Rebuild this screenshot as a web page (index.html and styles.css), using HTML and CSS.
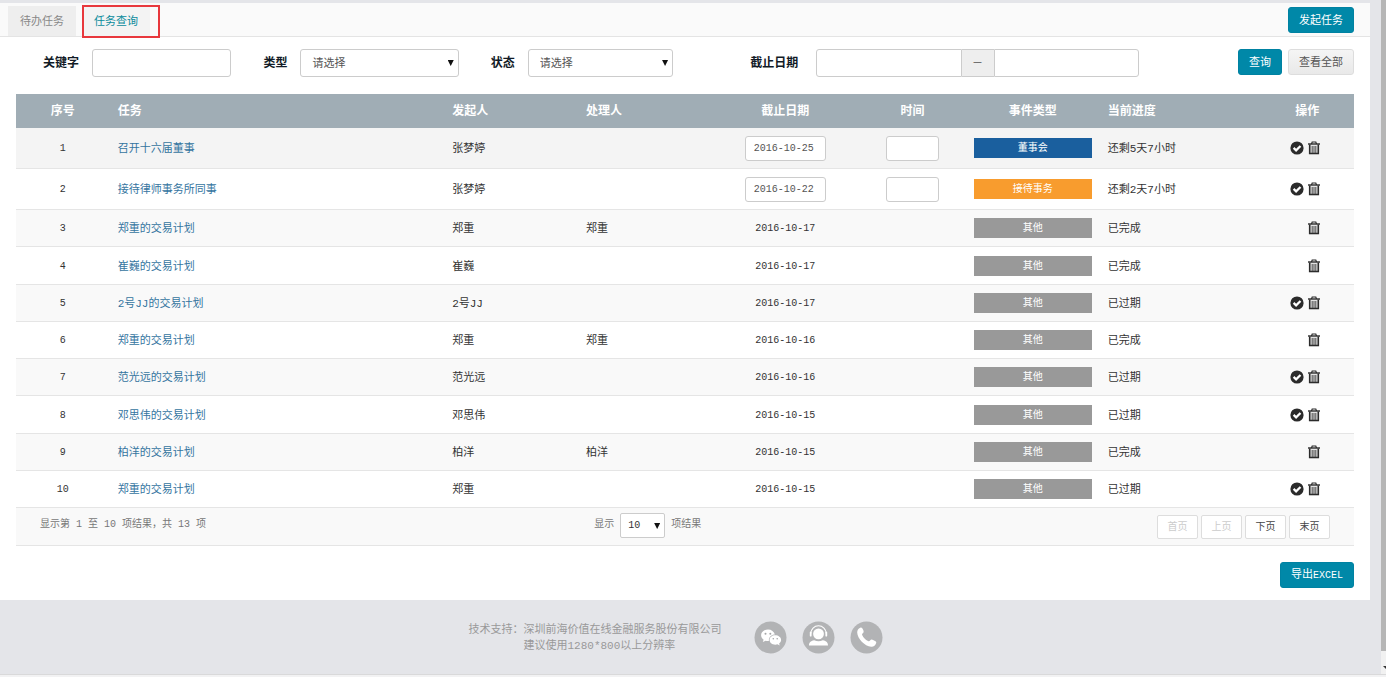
FILE: index.html
```html
<!DOCTYPE html>
<html lang="zh-CN">
<head>
<meta charset="utf-8">
<title>任务查询</title>
<link rel="stylesheet" href="styles.css">
</head>
<body>
<svg class="sprite" aria-hidden="true">
  <symbol id="i-check" viewBox="0 0 14 14"><circle cx="7" cy="7" r="6.6" fill="#2b2b2b"/><path d="M3.600 6.900l2.500 2.500 4.400-4.400" fill="none" stroke="#fff" stroke-width="2.200"/></symbol>
  <symbol id="i-trash" viewBox="0 0 14 14"><path d="M2.500 3.500h9v9.800h-9z" fill="#e2e2e2"/><g fill="none" stroke="#2b2b2b"><path d="M1 3h12" stroke-width="1.400"/><path d="M4.500 3l.7-2h3.600l.7 2" stroke-width="1.200"/><path d="M2.700 3.500v9h8.600v-9" stroke-width="1.600"/><path d="M5.200 5v7M7 5v7M8.800 5v7" stroke-width=".8"/></g></symbol>
</svg>
<div class="shell">
  <div class="page">
    <main class="panel">
      <header class="topbar">
        <nav class="tabs">
          <a class="tab" href="#todo">待办任务</a>
          <a class="tab tab-active" href="#query">任务查询</a>
        </nav>
        <button class="btn btn-primary" type="button">发起任务</button>
      </header>
      <form class="filters">
        <label for="keyword">关键字</label>
        <input class="field" id="keyword" type="text">
        <label for="type">类型</label>
        <span class="select"><select id="type"><option>请选择</option></select></span>
        <label for="state">状态</label>
        <span class="select"><select id="state"><option>请选择</option></select></span>
        <label class="label-date" for="from">截止日期</label>
        <div class="range">
          <input class="field" id="from" type="text">
          <span class="range-sep">－</span>
          <input class="field" type="text" aria-label="截止日期至">
        </div>
        <div class="filter-actions">
          <button class="btn btn-primary" type="button">查询</button>
          <button class="btn btn-plain" type="button">查看全部</button>
        </div>
      </form>
      <section class="results">
        <table class="tasks">
          <colgroup><col class="c7"><col class="c25"><col class="c10"><col class="c10"><col class="c11"><col class="c8"><col class="c10"><col class="c12"><col class="c7"></colgroup>
          <thead>
            <tr><th class="mid">序号</th><th>任务</th><th>发起人</th><th>处理人</th><th class="mid">截止日期</th><th class="mid">时间</th><th class="mid">事件类型</th><th>当前进度</th><th class="mid">操作</th></tr>
          </thead>
          <tbody>
            <tr class="open hover"><td class="num">1</td><td><a href="#t1">召开十六届董事</a></td><td>张梦婷</td><td></td><td class="num"><input class="field date" type="text" value="2016-10-25" aria-label="截止日期"></td><td class="num"><input class="field time" type="text" aria-label="时间"></td><td><span class="tag tag-board">董事会</span></td><td>还剩5天7小时</td><td class="ops"><button type="button" aria-label="完成"><svg><use href="#i-check"/></svg></button><button type="button" aria-label="删除"><svg><use href="#i-trash"/></svg></button></td></tr>
            <tr class="open"><td class="num">2</td><td><a href="#t2">接待律师事务所同事</a></td><td>张梦婷</td><td></td><td class="num"><input class="field date" type="text" value="2016-10-22" aria-label="截止日期"></td><td class="num"><input class="field time" type="text" aria-label="时间"></td><td><span class="tag tag-visit">接待事务</span></td><td>还剩2天7小时</td><td class="ops"><button type="button" aria-label="完成"><svg><use href="#i-check"/></svg></button><button type="button" aria-label="删除"><svg><use href="#i-trash"/></svg></button></td></tr>
            <tr><td class="num">3</td><td><a href="#t3">郑重的交易计划</a></td><td>郑重</td><td>郑重</td><td class="num">2016-10-17</td><td></td><td><span class="tag">其他</span></td><td>已完成</td><td class="ops"><button type="button" aria-label="删除"><svg><use href="#i-trash"/></svg></button></td></tr>
            <tr><td class="num">4</td><td><a href="#t4">崔巍的交易计划</a></td><td>崔巍</td><td></td><td class="num">2016-10-17</td><td></td><td><span class="tag">其他</span></td><td>已完成</td><td class="ops"><button type="button" aria-label="删除"><svg><use href="#i-trash"/></svg></button></td></tr>
            <tr><td class="num">5</td><td><a href="#t5">2号JJ的交易计划</a></td><td>2号JJ</td><td></td><td class="num">2016-10-17</td><td></td><td><span class="tag">其他</span></td><td>已过期</td><td class="ops"><button type="button" aria-label="完成"><svg><use href="#i-check"/></svg></button><button type="button" aria-label="删除"><svg><use href="#i-trash"/></svg></button></td></tr>
            <tr><td class="num">6</td><td><a href="#t6">郑重的交易计划</a></td><td>郑重</td><td>郑重</td><td class="num">2016-10-16</td><td></td><td><span class="tag">其他</span></td><td>已完成</td><td class="ops"><button type="button" aria-label="删除"><svg><use href="#i-trash"/></svg></button></td></tr>
            <tr><td class="num">7</td><td><a href="#t7">范光远的交易计划</a></td><td>范光远</td><td></td><td class="num">2016-10-16</td><td></td><td><span class="tag">其他</span></td><td>已过期</td><td class="ops"><button type="button" aria-label="完成"><svg><use href="#i-check"/></svg></button><button type="button" aria-label="删除"><svg><use href="#i-trash"/></svg></button></td></tr>
            <tr><td class="num">8</td><td><a href="#t8">邓思伟的交易计划</a></td><td>邓思伟</td><td></td><td class="num">2016-10-15</td><td></td><td><span class="tag">其他</span></td><td>已过期</td><td class="ops"><button type="button" aria-label="完成"><svg><use href="#i-check"/></svg></button><button type="button" aria-label="删除"><svg><use href="#i-trash"/></svg></button></td></tr>
            <tr><td class="num">9</td><td><a href="#t9">柏洋的交易计划</a></td><td>柏洋</td><td>柏洋</td><td class="num">2016-10-15</td><td></td><td><span class="tag">其他</span></td><td>已完成</td><td class="ops"><button type="button" aria-label="删除"><svg><use href="#i-trash"/></svg></button></td></tr>
            <tr><td class="num">10</td><td><a href="#t10">郑重的交易计划</a></td><td>郑重</td><td></td><td class="num">2016-10-15</td><td></td><td><span class="tag">其他</span></td><td>已过期</td><td class="ops"><button type="button" aria-label="完成"><svg><use href="#i-check"/></svg></button><button type="button" aria-label="删除"><svg><use href="#i-trash"/></svg></button></td></tr>
          </tbody>
        </table>
        <div class="table-foot">
          <span class="info">显示第 1 至 10 项结果，共 13 项</span>
          <div class="length">
            <label for="length">显示</label>
            <span class="select select-small"><select id="length"><option>10</option></select></span>
            <span>项结果</span>
          </div>
          <div class="pager">
            <button type="button" disabled>首页</button>
            <button type="button" disabled>上页</button>
            <button type="button">下页</button>
            <button type="button">末页</button>
          </div>
        </div>
        <div class="export"><button class="btn btn-primary" type="button">导出<span class="latin">EXCEL</span></button></div>
      </section>
    </main>
    <footer class="footer">
      <dl class="support">
        <dt>技术支持：</dt>
        <dd>深圳前海价值在线金融服务股份有限公司</dd>
        <dd>建议使用1280*800以上分辨率</dd>
      </dl>
      <div class="contacts">
        <a href="#wechat" aria-label="微信"><svg viewBox="0 0 33 33"><circle cx="16.500" cy="16.500" r="16" fill="#b2b3b5"/><path fill="#fff" d="M14 8.500c-3.900 0-6.900 2.500-6.900 5.700 0 1.900 1 3.400 2.500 4.500l-.8 2.300 2.800-1.300c1 .3 2.200.4 3.300.3-.4-3.700 2.500-6.500 6-6.500C20 10.500 17.500 8.500 14 8.500z"/><path fill="#fff" d="M21.200 14.300c-3.200 0-5.600 2.100-5.600 4.700s2.500 4.700 5.600 4.700c.8 0 1.600-.1 2.300-.4l2.200 1.200-.6-2c1.200-.9 2-2.100 2-3.500 0-2.600-2.700-4.700-5.900-4.700z"/><g fill="#a5a6a8"><circle cx="11.500" cy="12.700" r="1"/><circle cx="16.300" cy="12.700" r="1"/><circle cx="19.300" cy="17.700" r=".8"/><circle cx="23.200" cy="17.700" r=".8"/></g></svg></a>
        <a href="#service" aria-label="客服"><svg viewBox="0 0 33 33"><circle cx="16.500" cy="16.500" r="16" fill="#b2b3b5"/><circle cx="16.500" cy="12.900" r="5.400" fill="#fff"/><path d="M8.800 12.500a7.700 7.700 0 0 1 15.400 0" fill="none" stroke="#fff" stroke-width="1.100"/><path d="M8.700 11.300v3.400M24.300 11.300v3.400" stroke="#fff" stroke-width="1.800" stroke-linecap="round"/><path d="M7 24.500c0-3 1.500-4.300 5.200-5.200q4.300 2 8.600 0c3.700.9 5.200 2.200 5.200 5.200z" fill="#fff"/></svg></a>
        <a href="#phone" aria-label="电话"><svg viewBox="0 0 33 33"><circle cx="16.500" cy="16.500" r="16" fill="#b2b3b5"/><path fill="#fff" d="M10.300 6.700c1.200-.5 2 .2 2.700 1.900.7 1.600 1 2.600.1 3.400-1 .8-1.300 1.200-.8 2.300 1 2.300 3.200 4.500 5.700 5.700 1 .5 1.500.2 2.300-.7.8-1 1.600-.8 3.300-.1 2.200.9 3 1.600 2.600 2.800-.7 2.400-2.600 4-5 3.800C14.600 25.200 7.400 17.600 7.200 11.500c-.1-2.400 1.200-4.100 3.100-4.800z"/></svg></a>
      </div>
    </footer>
  </div>
  <div class="scroll" aria-hidden="true"><div class="thumb"></div><svg class="arrow" viewBox="0 0 5 5"><path d="M2 1h3v3z" fill="#333"/></svg></div>
</div>
</body>
</html>
```
FILE: styles.css
```css
* { box-sizing: border-box; }
body {
  margin: 0;
  background: #f2f2f3;
  color: #333;
  font: 11px/16px "Liberation Mono", "Noto Sans CJK SC", monospace;
}
button, input, select { font: inherit; color: inherit; margin: 0; }
a { text-decoration: none; }
.sprite { display: none; }

.shell { display: flex; min-height: calc(100vh - 3px); border-bottom: 1px solid #d9d9da; background: #e4e5e9; }
.page { flex: 1; padding-top: 3px; }
.panel { margin-right: 11px; background: #fff; }

.topbar {
  display: flex;
  justify-content: space-between;
  padding: 0 16px 0 8px;
  height: 34px;
  background: #fafafa;
  border-bottom: 1px solid #e4e4e4;
}
.topbar .btn { margin-top: 4px; }
.tabs { display: flex; gap: 6px; padding-top: 3px; }
.tab { padding: 8px 12px 6px; height: 30px; background: #eee; color: #888; }
.tab-active {
  position: relative;
  background: #f3f3f3;
  color: #0a8b9c;
}
.tab-active::after {
  content: "";
  position: absolute;
  inset: -1px -10px -2px 0;
  border: 2px solid #e8383d;
}

.btn {
  height: 26px;
  padding: 1px 10px 0;
  border: 1px solid #0082a2;
  border-radius: 3px;
  line-height: 16px;
}
.btn-primary { background: #0088a8; color: #fff; }
.btn-plain { background: linear-gradient(#f5f5f5, #e9e9e9); border-color: #ddd; color: #555; }
.latin { font-size: 10px; }

.filters {
  display: grid;
  grid-template-columns: 76fr 139fr 69fr 158fr 69fr 145fr 143fr 322fr 99fr auto;
  align-items: center;
  padding: 12px 16px 17px;
}
.filters label { padding: 2px 13px 0 0; text-align: right; font-size: 12px; font-weight: bold; color: #111a26; }
.filters .label-date { padding-right: 18px; }
.field {
  width: 100%;
  min-width: 0;
  height: 28px;
  padding: 0 8px;
  border: 1px solid #ccc;
  border-radius: 3px;
  background: #fff;
  color: #555;
}
.select { position: relative; display: block; }
.select select {
  appearance: none;
  width: 100%;
  height: 28px;
  padding: 2px 11px 0;
  border: 1px solid #ccc;
  border-radius: 3px;
  background: #fff;
  color: #555;
}
.select::after {
  content: "";
  position: absolute;
  right: 5px;
  top: 11px;
  width: 6px;
  height: 6px;
  background: #111;
  clip-path: polygon(0 0, 100% 0, 50% 100%);
  pointer-events: none;
}
.range { display: flex; }
.range .field { flex: 1; }
.range .field:first-child { border-radius: 3px 0 0 3px; }
.range .field:last-child { border-radius: 0 3px 3px 0; }
.range-sep {
  width: 32px;
  border: solid #ccc;
  border-width: 1px 0;
  background: #eee;
  color: #555;
  text-align: center;
  line-height: 28px;
  height: 28px;
}
.filter-actions { grid-column: 10; display: flex; gap: 6px; padding-bottom: 2px; }

.results { padding: 0 16px 12px; }
.tasks { width: 100%; table-layout: fixed; border-collapse: separate; border-spacing: 0; }
.c7 { width: 7%; }
.c8 { width: 8%; }
.c10 { width: 10%; }
.c11 { width: 11%; }
.c12 { width: 12%; }
.c25 { width: 25%; }
.tasks th {
  height: 34px;
  padding: 2px 8px 0;
  background: #a0adb5;
  color: #fff;
  font-size: 12px;
  text-align: left;
}
.tasks .mid { text-align: center; }
.tasks td { padding: 2px 8px 0; border-bottom: 1px solid #e5e5e5; }
.tasks td:has(.tag), .tasks td:has(.field) { padding-top: 0; }
.tasks tbody tr { height: 37px; }
.tasks tbody tr:nth-child(4n) { height: 38px; }
.tasks tbody tr.open { height: 41px; }
.tasks tbody tr:nth-child(odd) { background: #f9f9f9; }
.tasks tbody tr.hover { background: #f4f4f4; }
.tasks td a { color: #35759f; }
.tasks .num { text-align: center; font-size: 10px; }
.tasks .field { height: 25px; border-radius: 3px; vertical-align: middle; }
.tasks .date { width: 81px; }
.tasks .time { width: 53px; }
.tag {
  display: block;
  height: 20px;
  background: #999;
  color: #fff;
  font-size: 10px;
  line-height: 22px;
  text-align: center;
}
.tag-board { background: #1a5f9e; }
.tag-visit { background: #f89c2e; }
.tasks .ops { padding: 0 33px 0 0; text-align: right; white-space: nowrap; }
.ops button { padding: 0; border: 0; background: none; vertical-align: middle; }
.ops button + button { margin-left: 3px; }
.ops svg { display: block; width: 14px; height: 14px; }

.table-foot {
  display: flex;
  height: 38px;
  padding-right: 24px;
  border-bottom: 1px solid #e5e5e5;
  background: #f9f9f9;
  color: #777;
  font-size: 10px;
}
.info { width: 44%; padding: 9px 0 0 24px; }
.length { display: flex; gap: 6px; margin-top: 5px; line-height: 24px; }
.select-small select { width: 45px; height: 25px; padding: 0 7px; border-radius: 2px; color: #333; }
.select-small::after { top: 10px; }
.pager { display: flex; gap: 3px; margin: 7px 0 0 auto; }
.pager button {
  width: 41px;
  height: 24px;
  padding: 1px 0 0;
  border: 1px solid #ddd;
  border-radius: 2px;
  background: #fff;
  color: #444;
}
.pager button:disabled { color: #ccc; }
.export { padding-top: 16px; text-align: right; }
.export .btn { display: inline-block; vertical-align: top; }

.footer {
  display: flex;
  justify-content: center;
  gap: 32px;
  padding: 21px 30px 20px 0;
  color: #999;
}
.support { display: grid; grid-template-columns: auto auto; align-content: start; margin: 1px 0 0; }
.support dd { grid-column: 2; margin: 0; }
.contacts { display: flex; gap: 15px; }
.contacts svg { display: block; width: 33px; height: 33px; }

.scroll { display: flex; flex-direction: column; width: 5px; background: #f1f1f1; }
.thumb { flex: 1; background: #b6b6b6; }
.arrow { width: 5px; height: 5px; margin: 14px 0 4px; }
```
